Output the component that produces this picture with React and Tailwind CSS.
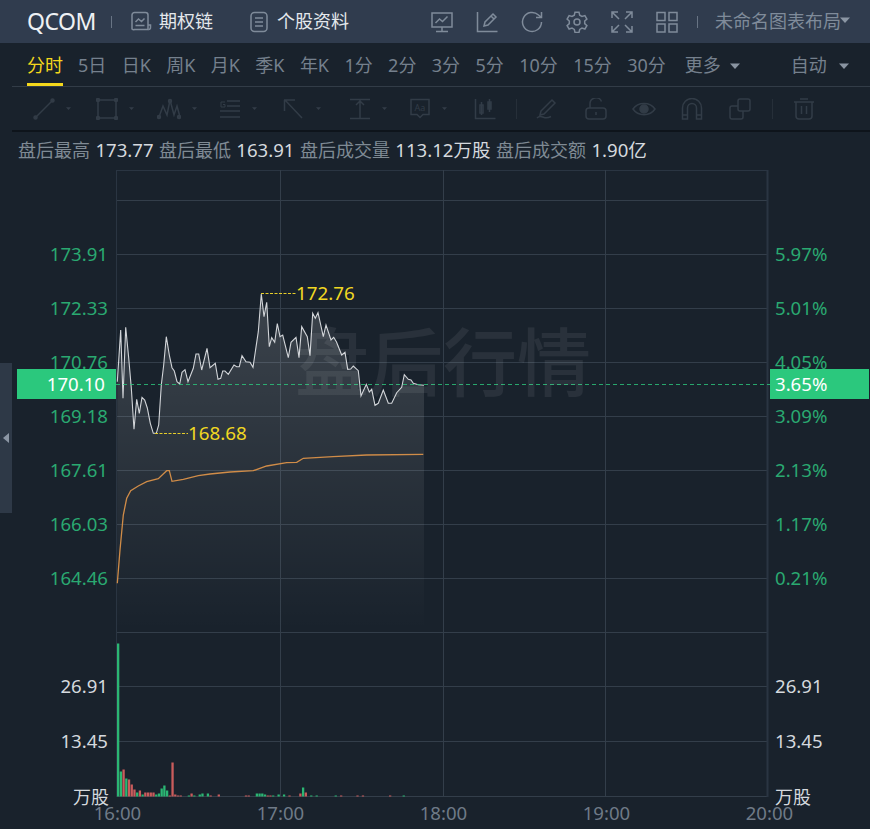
import React from 'react';

const font = { fontFamily: '"Noto Sans", "Noto Sans CJK SC", sans-serif' };

const pricePts = '117.3,381.7 120.7,330 123,398.3 125.7,327.3 128.7,358 131.3,388 134,429.3 136.7,399.3 139.3,413.3 142,397.3 144.7,400 147.3,408 150.3,423.3 153.3,433.3 156.3,433.3 158.7,425 161.3,385 163.7,365 166.3,336.7 169.3,355 172,367.7 174.3,371 177,381.7 179.7,384 182,372.3 185,369.7 188,381.7 193.3,368.3 196,354 198.7,354 201.7,370 207,348.3 210,367.7 215.3,363.3 218,379.3 220.7,378.3 222.7,371 225,371 228.3,374.3 234,365 236.7,366.7 239.3,366.7 242,355.7 246,361.7 250,362.3 253,367.3 258.3,331.7 261.3,294 264,316.7 266.7,302.3 269.3,346.7 271.7,337.7 274.7,342.3 277.3,323.7 280,336.7 282.7,335 288.3,357.7 291,342.3 296,337.3 299,357.7 301.7,326.7 307.3,336.7 310,355.7 312.7,313.3 315.3,318.3 318,312.7 323.3,336.7 326,325 331,340 333.7,337.3 336.5,342 341.7,355 345,352.3 347.7,369.3 350.7,369 353.3,366 358.3,370.7 361,396 366.3,384.3 369.3,392 371.7,389.3 375,405.3 378.3,403.3 383.3,390 388.3,403.3 391.7,403.3 396.7,392.7 401.7,387.3 404.3,374.7 408.3,379.3 411,380 413.3,383.3 418.3,384.7 424,385.3';

const avgPts = '117.3,583.3 120,550 123.3,515 126.7,498.3 130.7,490.7 138.3,486 146.7,481.7 158.3,478.7 166.7,470.7 169.3,470.7 172,481.3 183.3,479.3 198.3,475.7 210,474 230,472 253.3,470.7 266.7,466 286.7,462.7 296.7,462.3 303.3,458.3 333,456.7 366.7,455 423.3,454.3';

// [minute index, height, colour]
const G = '#2bb673';
const R = '#c95c5c';
const bars = [
  [0, 153, G], [1, 25, G], [2, 27, R], [3, 18, G], [4, 17, R], [5, 12, R], [6, 7, R], [7, 4, G], [8, 6, R], [9, 2, G],
  [10, 4, R], [11, 4, R], [12, 4, R], [13, 4, R], [14, 2, G], [15, 3, G], [16, 8, G], [17, 11, G], [18, 6, G], [19, 1, R],
  [20, 34, R], [21, 2, R], [22, 1, R], [23, 1, R], [26, 1, G], [27, 3, R], [28, 1, G], [30, 2, G], [31, 3, G], [33, 3, G],
  [34, 1, R], [37, 2, R], [47, 1, R], [48, 1, R], [51, 3, G], [52, 3, G], [53, 3, G], [54, 2, G], [55, 1, R], [56, 1, R],
  [57, 1, G], [59, 2, G], [61, 2, G], [63, 1, R], [67, 3, R], [68, 9, G], [69, 4, R], [71, 1, G], [73, 1, G], [80, 1, G],
  [82, 1, R], [88, 1, R], [90, 1, R], [100, 1, R], [105, 1, G],
];

const gridY = [200, 254, 308, 362, 416, 470, 524, 578, 632, 686, 741, 796.5];
const gridX = [280, 443, 605];

const tabs = ['5日', '日K', '周K', '月K', '季K', '年K', '1分', '2分', '3分', '5分', '10分', '15分', '30分'];
const leftPrices = ['173.91', '172.33', '170.76', '169.18', '167.61', '166.03', '164.46'];
const rightPct = ['5.97%', '5.01%', '4.05%', '3.09%', '2.13%', '1.17%', '0.21%'];
const times = ['16:00', '17:00', '18:00', '19:00', '20:00'];

const Caret = ({ className }) => (
  <svg width="10" height="6" viewBox="0 0 10 6" className={className}>
    <path d="M0 0.5h10L5 6z" fill="currentColor" />
  </svg>
);

const Ico = ({ w = 22, children, className = '' }) => (
  <svg width={w} height="22" viewBox={`0 0 ${w} 22`} fill="none" stroke="currentColor" strokeWidth="1.5" className={`shrink-0 ${className}`}>
    {children}
  </svg>
);

const ToolCaret = () => <Caret className="w-[5px] h-[3px] text-[#333d48]" />;

const Header = () => (
  <div className="flex items-center h-[43px] bg-[#303c4e] pl-[27px] text-[#7f8b9a]">
    <span className="text-[23px] text-[#eef1f4] w-[68px] tracking-[-0.5px]">QCOM</span>
    <div className="w-px h-[12px] bg-[#687484] ml-[16px]" />
    <Ico w={22} className="ml-[18px]">
      <path d="M2 4a2.5 2.5 0 0 1 2.5-2.5h11A2.5 2.5 0 0 1 18 4v14.5H4.5A2.5 2.5 0 0 1 2 18z" />
      <path d="M5.5 11l3-3 3 2.5 3-3M5.5 14.5h9M18 14h2.5v2.5a2 2 0 0 1-2 2" />
    </Ico>
    <span className="text-[18px] text-[#e4e8ec] ml-[7px]">期权链</span>
    <Ico w={18} className="ml-[37px]">
      <rect x="1" y="1.5" width="16" height="19" rx="3.5" />
      <path d="M5 7h8M5 11h8M5 15h8" />
    </Ico>
    <span className="text-[18px] text-[#e4e8ec] ml-[9px]">个股资料</span>
    <Ico className="ml-[82px]">
      <path d="M1 2h20v14H1zM11 16v4M5 20.5h12" />
      <path d="M4.5 12l4-4 3 2.5 5-5" />
    </Ico>
    <Ico className="ml-[23px]">
      <path d="M1.5 1v19.5h20" />
      <path d="M8 15l1-4 8-8 3 3-8 8zM15 5l3 3" />
    </Ico>
    <Ico className="ml-[23px]">
      <path d="M20.5 11a9.5 9.5 0 1 1-3-7l3 2.5M20.5 1v5.5H15" />
    </Ico>
    <Ico className="ml-[23px]">
      <path d="M9 1.2h4l.7 3 2.3 1.3 2.9-.9 2 3.4-2.2 2 0 2.6 2.2 2-2 3.4-2.9-.9-2.3 1.3-.7 3H9l-.7-3-2.3-1.3-2.9.9-2-3.4 2.2-2 0-2.6-2.2-2 2-3.4 2.9.9 2.3-1.3z" />
      <circle cx="11" cy="11" r="3" />
    </Ico>
    <Ico className="ml-[23px]">
      <path d="M1 7V1h6M15 1h6v6M1 15v6h6M21 15v6h-6M1.5 1.5L8 8M20.5 1.5L14 8M1.5 20.5L8 14M20.5 20.5L14 14" />
    </Ico>
    <Ico className="ml-[23px]">
      <rect x="1" y="1.5" width="8" height="8" />
      <rect x="13" y="1.5" width="8" height="8" />
      <rect x="1" y="13" width="8" height="8" />
      <rect x="13" y="13" width="8" height="8" />
    </Ico>
    <div className="w-px h-[12px] bg-[#687484] ml-[19px]" />
    <span className="text-[18px] ml-[17px] text-[#7f8b9a]">未命名图表布局</span>
    <Caret className="text-[#8b96a4] -mt-[3px] -ml-[1px]" />
  </div>
);

const Tabs = () => (
  <div className="flex h-[44px] ml-[12px] pl-[15px] pt-[2px] border-b border-[#323c47] text-[18px] text-[#75808d] items-center relative">
    <span className="text-[#f4d81c] w-[36px]">分时</span>
    <div className="absolute left-[15px] bottom-0 w-[36px] h-[3px] bg-[#f4d81c]" />
    <div className="flex gap-[15.4px] ml-[15px]">
      {tabs.map((t) => (
        <span key={t}>{t}</span>
      ))}
    </div>
    <span className="ml-[19px]">更多</span>
    <Caret className="ml-[9px] text-[#8994a1]" />
    <span className="ml-[51px]">自动</span>
    <Caret className="ml-[12px] text-[#8994a1]" />
  </div>
);

const ToolRow = () => (
  <div className="flex items-center h-[43px] ml-[12px] border-b-2 border-[#0e141b] text-[#323c47] box-content">
    <Ico className="ml-[21px]">
      <path d="M2 20L20 2" />
      <circle cx="2.5" cy="19.5" r="1.5" fill="currentColor" />
      <circle cx="19.5" cy="2.5" r="1.5" fill="currentColor" />
    </Ico>
    <span className="ml-[11px]"><ToolCaret /></span>
    <Ico className="ml-[25px]">
      <rect x="2" y="2" width="18" height="18" />
      <circle cx="2" cy="2" r="1.5" fill="currentColor" />
      <circle cx="20" cy="2" r="1.5" fill="currentColor" />
      <circle cx="2" cy="20" r="1.5" fill="currentColor" />
      <circle cx="20" cy="20" r="1.5" fill="currentColor" />
    </Ico>
    <span className="ml-[11px]"><ToolCaret /></span>
    <Ico w={24} className="ml-[23px]">
      <path d="M2 19L6 8l4 9 3-15 4 15 3-9 3 11" />
      <circle cx="2" cy="19" r="1.5" fill="currentColor" />
      <circle cx="13" cy="3" r="1.5" fill="currentColor" />
      <circle cx="22" cy="19" r="1.5" fill="currentColor" />
    </Ico>
    <span className="ml-[11px]"><ToolCaret /></span>
    <Ico className="ml-[22px]">
      <path d="M8 3h13M8 8h13M1 13h20M1 19h20" />
      <path d="M6 4H2v5h4V6.5H4" strokeWidth="1" />
    </Ico>
    <span className="ml-[11px]"><ToolCaret /></span>
    <Ico className="ml-[26px]">
      <path d="M1 2h11M1.5 2v11M2 2l17 18" />
    </Ico>
    <span className="ml-[11px]"><ToolCaret /></span>
    <Ico className="ml-[28px]">
      <path d="M1 1.5h20M1 20.5h20M11 2v18M7 7l4-4 4 4" />
    </Ico>
    <span className="ml-[11px]"><ToolCaret /></span>
    <Ico className="ml-[22px]">
      <path d="M2 1.5h18v15h-6l-3 3-3-3H2z" />
      <text x="11" y="13" textAnchor="middle" fontSize="9" fill="currentColor" stroke="none">Aa</text>
    </Ico>
    <span className="ml-[11px]"><ToolCaret /></span>
    <Ico className="ml-[27px]">
      <path d="M1.5 1v19.5h20" />
      <rect x="6" y="7" width="3" height="8" />
      <rect x="14" y="4" width="3" height="7" fill="currentColor" />
      <path d="M7.5 4v13M15.5 1v13" />
    </Ico>
    <div className="w-px h-[20px] bg-[#262f39] ml-[20px]" />
    <Ico className="ml-[18px]">
      <path d="M6 13L17 2l3 3L9 16l-4 1zM2 20c3-3 5-1 7-.5s5 0 7-1" />
    </Ico>
    <Ico className="ml-[28px]">
      <rect x="1" y="10" width="20" height="11" rx="3" />
      <path d="M5 10V6a6 6 0 0 1 11.5-2.5M11 14v3" />
    </Ico>
    <Ico w={24} className="ml-[25px]">
      <path d="M1 11c5-7.5 17-7.5 22 0-5 7.5-17 7.5-22 0z" />
      <circle cx="12" cy="11" r="4" fill="currentColor" />
    </Ico>
    <Ico className="ml-[25px]">
      <path d="M1.5 21V10a9.5 9.5 0 0 1 19 0v11h-5V10a4.5 4.5 0 0 0-9 0v11zM1.5 17h5M15.5 17h5" />
    </Ico>
    <Ico className="ml-[26px]">
      <rect x="9" y="1" width="12" height="12" rx="2" />
      <path d="M9 8H3a2 2 0 0 0-2 2v9a2 2 0 0 0 2 2h9a2 2 0 0 0 2-2v-6" />
    </Ico>
    <div className="w-px h-[20px] bg-[#262f39] ml-[21px]" />
    <Ico w={20} className="ml-[21px]">
      <path d="M0 4h20M6 1h8M2 4v14a3 3 0 0 0 3 3h10a3 3 0 0 0 3-3V4M7.5 8v8M12.5 8v8" />
    </Ico>
  </div>
);

const InfoRow = () => (
  <div className="flex items-center h-[38px] pl-[18px] -mt-px text-[18px] gap-[5.4px] text-[#7f8a94] whitespace-nowrap">
    <span>盘后最高</span>
    <span className="text-[#d5d9de] text-[18.6px]">173.77</span>
    <span>盘后最低</span>
    <span className="text-[#d5d9de] text-[18.6px]">163.91</span>
    <span>盘后成交量</span>
    <span className="text-[#d5d9de] text-[18.6px]">113.12万股</span>
    <span>盘后成交额</span>
    <span className="text-[#d5d9de] text-[18.6px]">1.90亿</span>
  </div>
);

const Plot = () => (
  <svg width="654" height="627" viewBox="116 170 654 627" className="shrink-0 overflow-visible block">
    <defs>
      <linearGradient id="area" gradientUnits="userSpaceOnUse" x1="0" y1="300" x2="0" y2="630">
        <stop offset="0" stopColor="#ffffff" stopOpacity="0.15" />
        <stop offset="1" stopColor="#ffffff" stopOpacity="0" />
      </linearGradient>
    </defs>
    <path d="M116 170.5H767" stroke="#2a3542" />
    {gridY.map((y) => (
      <path key={y} d={`M116 ${Math.floor(y) + 0.5}H767`} stroke="#333e4a" />
    ))}
    {gridX.map((x) => (
      <path key={x} d={`M${x + 0.5} 170V797`} stroke="#333e4a" />
    ))}
    <path d="M116.5 170V797" stroke="#2a3542" />
    <path d="M767.5 170V797" stroke="#2a3542" strokeWidth="2" />
    <polygon points={`117,630 ${pricePts} 424,630`} fill="url(#area)" stroke="none" />
    <polyline points={pricePts} fill="none" stroke="#d2d5d9" strokeWidth="1.1" />
    <polyline points={avgPts} fill="none" stroke="#d08c48" strokeWidth="1.3" />
    <path d="M116 384.5H770" stroke="#2cc97e" strokeOpacity="0.8" strokeDasharray="4 3" />
    <path d="M261 293.5H296M155 433.5H188" stroke="#e6cd2a" strokeDasharray="3 1.5" />
    {bars.map(([i, h, c]) => (
      <rect key={i} x={117 + i * 2.72} y={796.5 - h} width="2.3" height={h} fill={c} />
    ))}
  </svg>
);

const PriceTag = ({ className, children }) => (
  <div className={`absolute top-[199px] h-[30px] bg-[#2bc87d] text-white text-[18.6px] flex items-center ${className}`}>
    {children}
  </div>
);

const Chart = () => (
  <div className="relative flex h-[627px] mt-px">
    <div className="w-[116px] shrink-0 pr-[8px] pt-[57px] text-right text-[18.6px] text-[#2aa971]">
      {leftPrices.map((p) => (
        <div key={p} className="h-[54px] flex items-center justify-end">{p}</div>
      ))}
      <div className="h-[54px] mt-[54px] flex items-center justify-end text-[#d5d9de]">26.91</div>
      <div className="h-[55px] flex items-center justify-end text-[#d5d9de]">13.45</div>
      <div className="h-[58px] flex items-center justify-end text-[#d5d9de] text-[18px] -mr-[1px]">万股</div>
    </div>
    <Plot />
    <div className="pl-[5px] pt-[57px] text-[18.6px] text-[#2aa971] whitespace-nowrap">
      {rightPct.map((p) => (
        <div key={p} className="h-[54px] flex items-center">{p}</div>
      ))}
      <div className="h-[54px] mt-[54px] flex items-center text-[#d5d9de]">26.91</div>
      <div className="h-[55px] flex items-center text-[#d5d9de]">13.45</div>
      <div className="h-[58px] flex items-center text-[#d5d9de] text-[18px]">万股</div>
    </div>

    <PriceTag className="left-[17px] w-[99px] justify-end pr-[11px]">170.10</PriceTag>
    <PriceTag className="left-[770px] w-[99px] pl-[5px]">3.65%</PriceTag>

    <span className="absolute left-[296px] top-[110px] text-[18.8px] leading-[26px] text-[#f0d722]">172.76</span>
    <span className="absolute left-[188px] top-[250px] text-[18.8px] leading-[26px] text-[#f0d722]">168.68</span>
    <span className="absolute left-[295px] top-[148px] text-[74px] leading-[88px] text-white/[0.07] whitespace-nowrap font-medium">盘后行情</span>
  </div>
);

export default function App() {
  return (
    <div className="relative w-[870px] h-[829px] overflow-hidden bg-[#19222c]" style={font}>
      <Header />
      <Tabs />
      <ToolRow />
      <InfoRow />
      <Chart />
      <div className="flex h-[32px] pl-[36px] items-center text-[18.6px] text-[#6f7a87]">
        {times.map((t) => (
          <div key={t} className="w-[163px] text-center">{t}</div>
        ))}
      </div>
      <div className="absolute left-0 top-[363px] w-[12px] h-[150px] bg-[#2e3947] flex items-center">
        <svg width="7" height="10" viewBox="0 0 7 10" className="ml-[3px]">
          <path d="M6 0v10L0 5z" fill="#8b96a4" />
        </svg>
      </div>
    </div>
  );
}
